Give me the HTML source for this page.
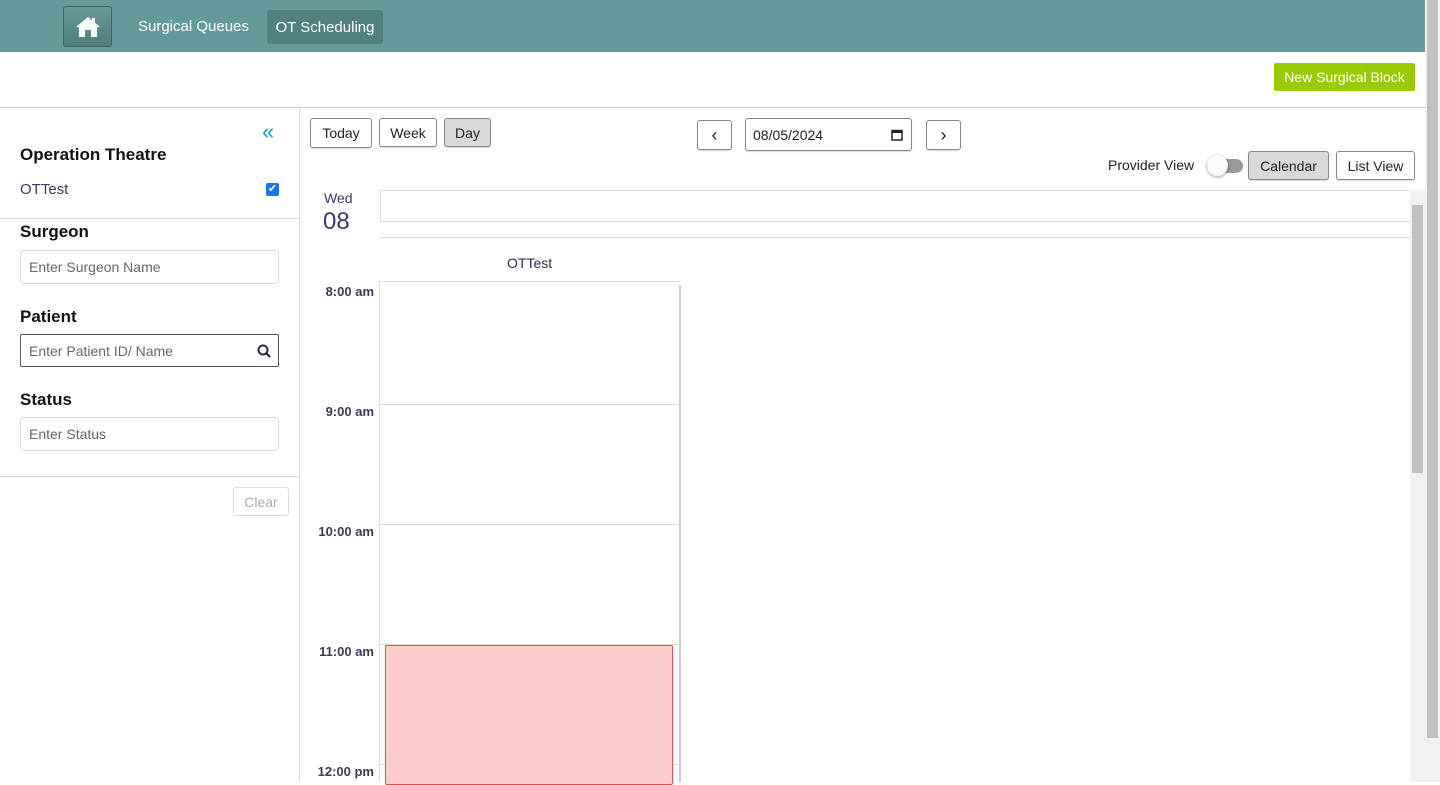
<!DOCTYPE html>
<html><head><meta charset="utf-8"><style>
*{box-sizing:border-box;margin:0;padding:0}
body{width:1440px;height:782px;overflow:hidden;font-family:"Liberation Sans",sans-serif;background:#fff;position:relative;color:#222}
.a{position:absolute}
.btn{position:absolute;border:1px solid #888;border-radius:3px;background:#fff;font-size:14px;color:#222;display:flex;align-items:center;justify-content:center;box-shadow:0 1px 1px rgba(0,0,0,.15)}
.inp{position:absolute;left:20px;width:259px;height:34px;border:1px solid #ddd;border-radius:4px;font-size:14px;color:#666;padding-left:8px;display:flex;align-items:center}
h3{position:absolute;left:20px;font-size:17px;font-weight:bold;color:#111}
.time{position:absolute;right:1066px;font-size:13px;font-weight:bold;color:#3a3a5a;width:80px;text-align:right}
.hl{position:absolute;left:380px;width:300px;height:1px;background:#ddd}
</style></head><body>
<div class="a" style="left:0;top:0;width:1425px;height:52px;background:#669999"></div>
<div class="a" style="left:63px;top:6px;width:49px;height:41px;background:linear-gradient(#6b9a9a,#4f7c7c);border:1px solid #3f6363;border-radius:3px;display:flex;align-items:center;justify-content:center">
<svg width="26" height="22" viewBox="0 0 26 22"><path d="M13 1 L1 11 L4 11 L4 21 L10 21 L10 14 L16 14 L16 21 L22 21 L22 11 L25 11 L20 6.8 L20 2 L17 2 L17 4.3 Z" fill="#fff"/></svg></div>
<div class="a" style="left:138px;top:18px;font-size:15px;color:#fff">Surgical Queues</div>
<div class="a" style="left:267px;top:10px;width:116px;height:34px;background:#527f7f;border-radius:3px;color:#fff;font-size:15px;display:flex;align-items:center;justify-content:center">OT Scheduling</div>
<div class="a" style="left:1274px;top:63px;width:141px;height:28px;background:#99cc00;border-radius:2px;color:#fff;font-size:14px;display:flex;align-items:center;justify-content:center">New Surgical Block</div>
<div class="a" style="left:0;top:107px;width:1425px;height:1px;background:#ccc"></div>
<div class="a" style="left:299px;top:107px;width:1px;height:675px;background:#ddd"></div>
<div class="a" style="left:262px;top:119px;color:#1aa3c7;font-size:22px">«</div>
<h3 style="top:145px">Operation Theatre</h3>
<div class="a" style="left:20px;top:181px;font-size:15px;color:#3a3a6a">OTTest</div>
<div class="a" style="left:266px;top:183px;width:13px;height:13px;background:#1a73e8;border-radius:2px;color:#fff;font-size:11px;line-height:13px;text-align:center">✔</div>
<div class="a" style="left:0;top:218px;width:299px;height:1px;background:#ddd"></div>
<h3 style="top:222px">Surgeon</h3>
<div class="inp" style="top:250px">Enter Surgeon Name</div>
<h3 style="top:307px">Patient</h3>
<div class="inp" style="top:334px;height:33px;border-color:#555;border-radius:2px">Enter Patient ID/ Name
<svg class="a" style="right:7px;top:9px" width="14" height="14" viewBox="0 0 14 14"><circle cx="6" cy="6" r="4.5" fill="none" stroke="#2a2a4a" stroke-width="2"/><path d="M9.2 9.2 L13 13" stroke="#2a2a4a" stroke-width="2.2"/></svg></div>
<h3 style="top:390px">Status</h3>
<div class="inp" style="top:417px">Enter Status</div>
<div class="a" style="left:0;top:476px;width:299px;height:1px;background:#ddd"></div>
<div class="a" style="left:233px;top:487px;width:56px;height:29px;border:1px solid #ddd;border-radius:3px;color:#aaa;font-size:14px;display:flex;align-items:center;justify-content:center">Clear</div>
<div class="btn" style="left:310px;top:118px;width:62px;height:30px">Today</div>
<div class="btn" style="left:379px;top:118px;width:58px;height:29px">Week</div>
<div class="btn" style="left:444px;top:118px;width:47px;height:29px;background:#d9d9d9">Day</div>
<div class="btn" style="left:697px;top:120px;width:35px;height:30px;font-size:18px">‹</div>
<div class="btn" style="left:745px;top:118px;width:167px;height:33px;justify-content:flex-start;padding-left:7px">08/05/2024
<svg class="a" style="right:8px;top:10px" width="12" height="12" viewBox="0 0 12 12"><rect x="1" y="1.5" width="10" height="9.5" fill="none" stroke="#222" stroke-width="1.5"/><rect x="1" y="1.5" width="10" height="2.5" fill="#222"/></svg></div>
<div class="btn" style="left:926px;top:120px;width:35px;height:30px;font-size:18px">›</div>
<div class="a" style="left:1108px;top:157px;font-size:14px">Provider View</div>
<div class="a" style="left:1209px;top:159px;width:34px;height:14px;background:#999;border-radius:7px"></div>
<div class="a" style="left:1207px;top:155px;width:21px;height:21px;background:#fafafa;border-radius:50%;box-shadow:0 1px 3px rgba(0,0,0,.4)"></div>
<div class="btn" style="left:1248px;top:151px;width:81px;height:29px;background:#d9d9d9">Calendar</div>
<div class="btn" style="left:1336px;top:151px;width:79px;height:29px">List View</div>
<div class="a" style="left:324px;top:190px;font-size:14px;color:#3a3a6a">Wed</div>
<div class="a" style="left:323px;top:208px;font-size:24px;color:#3a3a6a">08</div>
<div class="a" style="left:380px;top:190px;width:1030px;height:32px;border:1px solid #ddd;border-right:none"></div>
<div class="a" style="left:380px;top:237px;width:1030px;height:1px;background:#ddd"></div>
<div class="a" style="left:507px;top:255px;font-size:14px;color:#2a2a4a">OTTest</div>
<div class="a" style="left:379px;top:281px;width:1px;height:501px;background:#ddd"></div>
<div class="a" style="left:679px;top:285px;width:2px;height:497px;background:#ccc"></div>
<div class="hl" style="top:281px"></div>
<div class="hl" style="top:404px"></div>
<div class="hl" style="top:524px"></div>
<div class="hl" style="top:644px"></div>
<div class="hl" style="top:764px"></div>
<div class="time" style="top:284px">8:00 am</div>
<div class="time" style="top:404px">9:00 am</div>
<div class="time" style="top:524px">10:00 am</div>
<div class="time" style="top:644px">11:00 am</div>
<div class="time" style="top:764px">12:00 pm</div>
<div class="a" style="left:385px;top:645px;width:288px;height:140px;background:#fdcccc;border:1px solid #e05050;border-radius:2px"></div>
<div class="a" style="left:1410px;top:190px;width:15px;height:592px;background:#f1f1f1"></div>
<div class="a" style="left:1412px;top:205px;width:11px;height:268px;background:#c1c1c1"></div>
<div class="a" style="left:1425px;top:0;width:15px;height:782px;background:#f1f1f1"></div>
<div class="a" style="left:1427px;top:0;width:11px;height:738px;background:#c1c1c1"></div>
</body></html>
